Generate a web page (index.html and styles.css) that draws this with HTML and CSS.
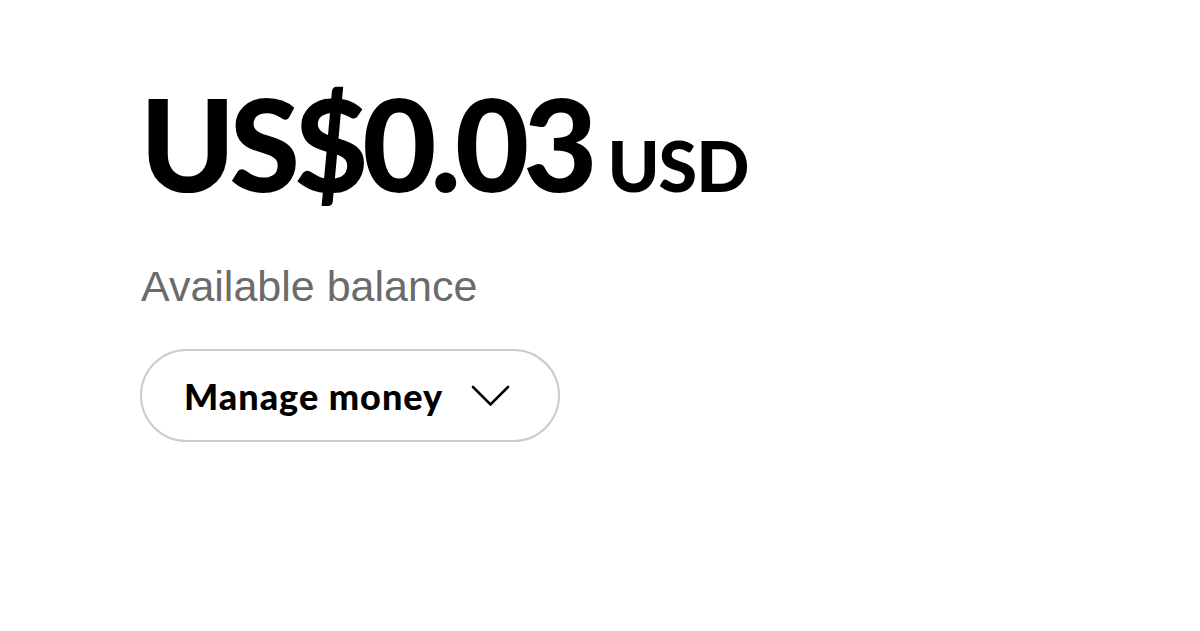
FILE: index.html
```html
<!DOCTYPE html>
<html lang="en">
<head>
<meta charset="utf-8">
<title>Balance</title>
<link rel="stylesheet" href="styles.css">
</head>
<body>
<main class="balance">
  <div class="amount-row">
    <span class="amount">US$0.03</span>
    <span class="currency">USD</span>
  </div>
  <p class="label">Available balance</p>
  <button class="manage" type="button">
    <span class="manage-text">Manage money</span>
    <svg class="chevron" width="40" height="24" viewBox="0 0 40 24" aria-hidden="true">
      <polyline points="2,3 19.5,20.5 37,3" fill="none" stroke="#000" stroke-width="2.6" stroke-linecap="round" stroke-linejoin="miter"/>
    </svg>
  </button>
</main>
</body>
</html>
```

FILE: styles.css
```css
html, body {
  margin: 0;
  padding: 0;
  background: #ffffff;
}

.balance {
  display: flex;
  flex-direction: column;
  align-items: flex-start;
  padding: 79px 0 0 140px;
}

.amount-row {
  display: flex;
  align-items: baseline;
  gap: 16px;
  color: #000;
  font-family: Lato, "Noto Sans", sans-serif;
  font-weight: 900;
}

.amount {
  font-size: 128px;
  line-height: 128px;
  letter-spacing: -6px;
}

.currency {
  font-size: 70px;
  line-height: 70px;
  letter-spacing: -1px;
}

.label {
  margin: 54px 0 0 1px;
  font-family: "Liberation Sans", Arial, sans-serif;
  font-size: 43px;
  line-height: 50px;
  color: #6b6b6b;
}

.manage {
  margin-top: 38px;
  display: flex;
  align-items: center;
  gap: 28px;
  box-sizing: border-box;
  width: 420px;
  height: 93px;
  padding: 0 0 0 42px;
  border: 2px solid #cccccc;
  border-radius: 47px;
  background: #fff;
  font-family: Lato, "Noto Sans", sans-serif;
  font-weight: 900;
  font-size: 36px;
  color: #000;
  letter-spacing: 1px;
}

.chevron {
  display: block;
}
```
